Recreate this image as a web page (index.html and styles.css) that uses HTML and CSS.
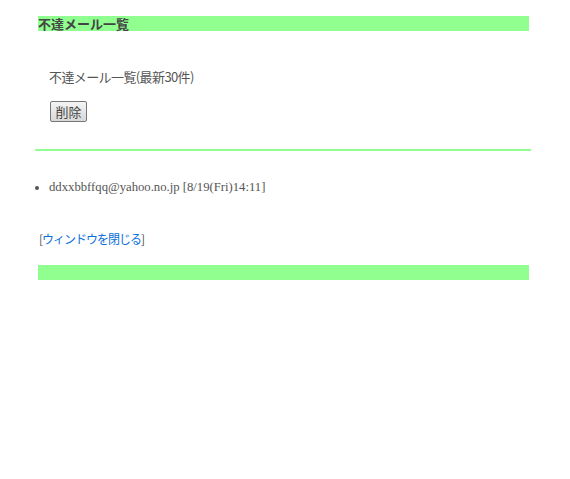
FILE: index.html
```html
<!DOCTYPE html>
<html lang="ja">
<head>
    <meta charset="UTF-8">
    <title>不達メール一覧</title>
    <link rel="stylesheet" href="styles.css">
</head>
<body>
    <div class="page">
        <div class="title-bar">不達メール一覧</div>

        <div class="section">
            <p class="caption">不達メール一覧(最新30件)</p>
            <button class="delete-btn">削除</button>
        </div>

        <hr class="divider">

        <ul class="mail-list">
            <li>ddxxbbffqq@yahoo.no.jp [8/19(Fri)14:11]</li>
        </ul>

        <p class="close-link">[<a href="#">ウィンドウを閉じる</a>]</p>

        <div class="footer-bar"></div>
    </div>
</body>
</html>
```

FILE: styles.css
```css
body {
    margin: 0;
    background-color: #ffffff;
    color: #555555;
    font-family: "Noto Sans CJK JP", "Liberation Sans", sans-serif;
    font-size: 13px;
}

.page {
    width: 496px;
    margin: 16px 0 0 35px;
}

/* green title strip */
.title-bar {
    margin-left: 3px;
    width: 491px;
    height: 15px;
    line-height: 15px;
    background-color: #90ff90;
    font-weight: bold;
    font-size: 13px;
    color: #444444;
}

.section {
    padding: 37px 0 0 14px;
}

.caption {
    margin: 0;
    line-height: 18px;
    letter-spacing: -0.6px;
}

.delete-btn {
    margin: 15px 0 0 1px;
    width: 37px;
    height: 21px;
    padding: 0;
    font-family: inherit;
    font-size: 13px;
    color: #444444;
    background: linear-gradient(#f4f4f4, #d8d8d8);
    border: 1px solid #777777;
    border-radius: 2px;
}

.divider {
    margin: 27px 0 0 0;
    border: none;
    height: 2px;
    background-color: #90ff90;
}

.mail-list {
    margin: 27px 0 0 0;
    padding-left: 14px;
    font-family: "Liberation Serif", serif;
    font-size: 12.7px;
    line-height: 18px;
}

.close-link {
    margin: 34px 0 0 4px;
    line-height: 18px;
    font-size: 12px;
    letter-spacing: -1px;
}

.close-link a {
    color: #0a6fd8;
    text-decoration: none;
}

.footer-bar {
    margin: 17px 0 0 3px;
    width: 491px;
    height: 15px;
    background-color: #90ff90;
}
```
